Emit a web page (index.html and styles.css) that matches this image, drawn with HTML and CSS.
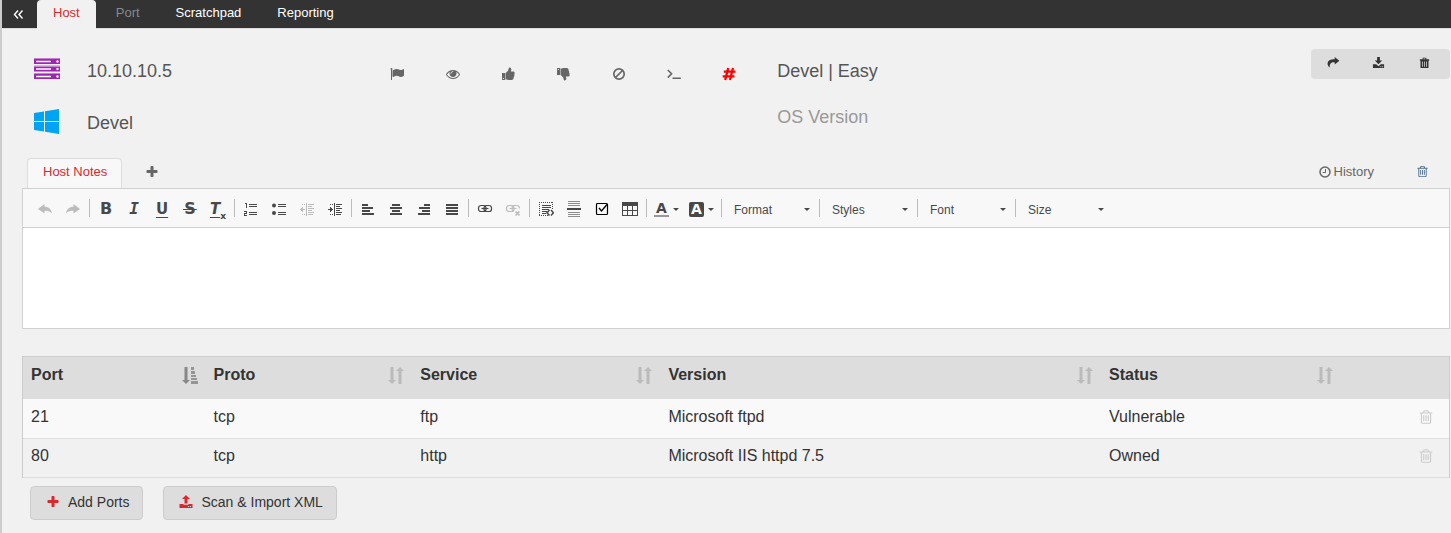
FILE: index.html
```html
<!DOCTYPE html>
<html lang="en">
<head>
<meta charset="utf-8">
<title>10.10.10.5 - Host</title>
<link rel="stylesheet" href="styles.css">
</head>
<body>
<svg class="sprite" aria-hidden="true">
  <symbol id="collapse" viewBox="0 0 14 14"><path d="M7 3.500 3.500 7.500 7 11.500M11.500 3.500 8 7.500l3.500 4" fill="none" stroke="currentColor" stroke-width="1.400"/></symbol>
  <symbol id="flag" viewBox="0 0 1792 1792"><path d="M320 256q0 72-64 110v1266q0 13-9.500 22.500t-22.500 9.500h-64q-13 0-22.500-9.500t-9.500-22.500v-1266q-64-38-64-110 0-53 37.500-90.500t90.500-37.500 90.500 37.500 37.500 90.500zm1472 64v763q0 25-12.500 38.500t-39.500 27.500q-215 116-369 116-61 0-123.500-22t-108.500-48-115.500-48-142.500-22q-192 0-464 146-17 9-33 9-26 0-45-19t-19-45v-742q0-32 31-55 21-14 79-43 236-120 421-120 107 0 200 29t219 88q38 19 88 19 54 0 117.500-21t110-47 88-47 54.500-21q26 0 45 19t19 45z"/></symbol>
  <symbol id="eye" viewBox="0 0 1792 1792"><path d="M1664 960q-152-236-381-353 61 104 61 225 0 185-131.500 316.500t-316.500 131.500-316.500-131.500-131.500-316.500q0-121 61-225-229 117-381 353 133 205 333.500 326.500t434.500 121.500 434.500-121.500 333.500-326.500zm-720-384q0-20-14-34t-34-14q-125 0-214.500 89.500t-89.500 214.500q0 20 14 34t34 14 34-14 14-34q0-86 61-147t147-61q20 0 34-14t14-34zm848 384q0 34-20 69-140 230-376.500 368.500t-499.500 138.500-499.500-139-376.500-368q-20-35-20-69t20-69q140-229 376.500-368t499.500-139 499.500 139 376.500 368q20 35 20 69z"/></symbol>
  <symbol id="thumb" viewBox="0 0 14 14"><path fill-rule="evenodd" d="M1 6h3.200v7H1zM1.800 11v1h1v-1zM4.700 6 7.200 3.400 7.800.9Q8 .3 8.800.5 10.500 1 10.400 2.800L9.800 4.600h2.700Q13.800 4.800 13.700 6.100q-.1.600-.4.900.5.800-.2 1.700.3.900-.4 1.600.2 2.400-1.800 2.700H8Q6.500 12.800 4.700 12.200z"/></symbol>
  <symbol id="ban" viewBox="0 0 14 14"><g fill="none" stroke="currentColor" stroke-width="1.700"><circle cx="7" cy="7" r="5.200"/><path d="m3.500 10.500 7-7"/></g></symbol>
  <symbol id="prompt" viewBox="0 0 14 14"><path d="M.8 3 4.600 6.800 .8 10.600M5.500 11.200h8.300" fill="none" stroke="currentColor" stroke-width="1.600"/></symbol>
  <symbol id="hash" viewBox="0 0 14 14"><path d="M6.200 1 3.200 13M11 1 8 13M1.800 4.700h11.700M.7 9.300h11.700" fill="none" stroke="currentColor" stroke-width="2.300"/></symbol>
  <symbol id="share" viewBox="0 0 14 14"><path d="M8.300 1 13.300 5.100 8.300 9.200V6.700C4.200 6.500 2.700 8 2.900 12.500 1.400 11 .5 9.500.6 8 .9 4.700 3.700 3.400 8.300 3.400z"/></symbol>
  <symbol id="download" viewBox="0 0 14 14"><path fill-rule="evenodd" d="M5.500 1h3v3.800H11L7 8.800l-4-4h2.500zM1 9h3.500L7 11l2.500-2H13v4H1zM9 11v1h1v-1zM11 11v1h1v-1z"/></symbol>
  <symbol id="upload" viewBox="0 0 14 14"><path fill-rule="evenodd" d="m7 0 4 4H8.500v4.500h-3V4H3zM.5 9h4v.8h5V9h4v4H.5zM9 11v1h1v-1zM11 11v1h1v-1z"/></symbol>
  <symbol id="bin" viewBox="0 0 14 14"><path fill-rule="evenodd" d="M5 3.500V2h4v1.500h3V5h-.7v8H2.700V5H2V3.500zM6 2.800v.7h2v-.7zM4.400 6v5.500h.8V6zM6.600 6v5.500h.8V6zM8.800 6v5.500h.8V6z"/></symbol>
  <symbol id="trash" viewBox="0 0 1792 1792"><path d="M704 736v576q0 14-9 23t-23 9h-64q-14 0-23-9t-9-23v-576q0-14 9-23t23-9h64q14 0 23 9t9 23zm256 0v576q0 14-9 23t-23 9h-64q-14 0-23-9t-9-23v-576q0-14 9-23t23-9h64q14 0 23 9t9 23zm256 0v576q0 14-9 23t-23 9h-64q-14 0-23-9t-9-23v-576q0-14 9-23t23-9h64q14 0 23 9t9 23zm128 724v-948h-896v948q0 22 7 40.500t14.500 27 10.500 8.500h832q3 0 10.500-8.500t14.500-27 7-40.500zm-672-1076h448l-48-117q-7-9-17-11h-317q-10 2-17 11zm928 32v64q0 14-9 23t-23 9h-96v948q0 83-47 143.500t-113 60.500h-832q-66 0-113-58.500t-47-141.500v-952h-96q-14 0-23-9t-9-23v-64q0-14 9-23t23-9h309l70-167q15-37 54-63t79-26h320q40 0 79 26t54 63l70 167h309q14 0 23 9t9 23z"/></symbol>
  <symbol id="plus" viewBox="0 0 1792 1792"><path d="M1600 736v192q0 40-28 68t-68 28h-416v416q0 40-28 68t-68 28h-192q-40 0-68-28t-28-68v-416h-416q-40 0-68-28t-28-68v-192q0-40 28-68t68-28h416v-416q0-40 28-68t68-28h192q40 0 68 28t28 68v416h416q40 0 68 28t28 68z"/></symbol>
  <symbol id="clock" viewBox="0 0 14 14"><g fill="none" stroke="currentColor"><circle cx="7" cy="7" r="5" stroke-width="1.500"/><path d="M7.500 4v3.500H4.700"/></g></symbol>
  <symbol id="undo" viewBox="0 0 16 16"><path d="M1 8 7.500 3v2.700C11.500 5.700 14.500 8 15 12.500 12.500 10 10.500 9.700 7.500 9.800V12.500z"/></symbol>
  <symbol id="sort" viewBox="0 0 16 18"><path d="M2.500 0h3v13H8l-4 4-4-4h2.500zM10.500 17h3V4H16l-4-4-4 4h2.500z"/></symbol>
  <symbol id="sorted" viewBox="0 0 16 18"><path d="M2.500 0h3v13H8l-4 4-4-4h2.500z"/><path opacity=".85" d="M9 0h3v3H9zM9 4h4v3H9zM9 8h5v2H9zM9 11h6v2H9zM9 14h7v3H9z"/></symbol>
</svg>

<nav class="topbar" aria-label="Main">
  <button class="topbar-collapse" aria-label="Collapse sidebar"><svg class="i14"><use href="#collapse"/></svg></button>
  <a class="tab tab-active" href="#host">Host</a>
  <a class="tab tab-muted" href="#port">Port</a>
  <a class="tab" href="#scratchpad">Scratchpad</a>
  <a class="tab" href="#reporting">Reporting</a>
</nav>

<main>
  <section class="host">
    <div class="host-id">
      <svg class="server" viewBox="0 0 26 22" aria-hidden="true"><path d="M0 1h26v5H0zM0 8.500h26v5H0zM0 16h26v5H0z" fill="#9c27b0"/><path d="M0 .5h26M0 8h26M0 15.500h26" stroke="#c77fd3"/><path d="M2 3.500h15M2 11h15M2 18.500h15" stroke="#fff" stroke-width="1.300"/><g fill="#fff"><circle cx="23.500" cy="3.500" r="1.200"/><circle cx="23.500" cy="11" r="1.200"/><circle cx="23.500" cy="18.500" r="1.200"/></g></svg>
      <span>10.10.10.5</span>
      <svg class="windows" viewBox="0 0 25 25" aria-hidden="true"><path fill="#00a4f4" d="M0 4 10 2.500V12H0zM11 2.300 25 0v12H11zM0 13h10v9.500L0 21zM11 13h14v12l-14-2.300z"/></svg>
      <span>Devel</span>
    </div>
    <div class="actions">
      <button aria-label="Flag"><svg class="i14"><use href="#flag"/></svg></button>
      <button aria-label="Watch"><svg class="i14"><use href="#eye"/></svg></button>
      <button aria-label="Thumbs up"><svg class="i14"><use href="#thumb"/></svg></button>
      <button aria-label="Thumbs down"><svg class="i14 flip-y"><use href="#thumb"/></svg></button>
      <button aria-label="Out of scope"><svg class="i14"><use href="#ban"/></svg></button>
      <button aria-label="Shell"><svg class="i14"><use href="#prompt"/></svg></button>
      <button class="root" aria-label="Root"><svg class="i14"><use href="#hash"/></svg></button>
    </div>
    <div class="host-os">
      <span>Devel | Easy</span>
      <input type="text" placeholder="OS Version" aria-label="OS Version">
    </div>
    <div class="host-tools">
      <button aria-label="Share"><svg class="i14"><use href="#share"/></svg></button>
      <button aria-label="Download"><svg class="i14"><use href="#download"/></svg></button>
      <button aria-label="Delete host"><svg class="i14"><use href="#bin"/></svg></button>
    </div>
  </section>

  <div class="note-tabs">
    <a class="note-tab" href="#notes">Host Notes</a>
    <button class="note-add" aria-label="Add note"><svg class="i14"><use href="#plus"/></svg></button>
    <button class="history"><svg class="i14"><use href="#clock"/></svg>History</button>
    <button class="note-delete" aria-label="Delete note"><svg class="i14"><use href="#trash"/></svg></button>
  </div>

  <section class="editor">
    <div class="toolbar">
      <button class="off" aria-label="Undo"><svg class="i16"><use href="#undo"/></svg></button>
      <button class="off" aria-label="Redo"><svg class="i16 flip-x"><use href="#undo"/></svg></button>
      <span class="sep"></span>
      <button class="letter" aria-label="Bold">B</button>
      <button class="letter mono" aria-label="Italic">I</button>
      <button class="letter under" aria-label="Underline">U</button>
      <button class="letter" aria-label="Strikethrough"><span class="strike">S</span></button>
      <button class="letter clear" aria-label="Remove format"><u>T</u><sub>x</sub></button>
      <span class="sep"></span>
      <button aria-label="Numbered list"><svg class="i16 px" viewBox="0 0 16 16"><path d="M2 2h2v5H3V3H2zM1 10h3v3H2v1h2v1H1v-3h2v-1H1zM6 3h8v1H6zM6 5h8v1H6zM6 11h8v1H6zM6 13h8v1H6z"/></svg></button>
      <button aria-label="Bulleted list"><svg class="i16" viewBox="0 0 16 16"><circle cx="3" cy="4.500" r="2"/><circle cx="3" cy="12" r="2"/><path d="M7 3h8v1H7zM7 5h8v1H7zM7 11h8v1H7zM7 13h8v1H7z"/></svg></button>
      <button class="off" aria-label="Decrease indent"><svg class="i16 px" viewBox="0 0 16 16"><path d="M3 3h1v1H3zM5 3h1v1H5zM3 13h1v1H3zM5 13h1v1H5zM1 8h5v1H1zM2 7h1v3H2zM3 6h1v5H3zM7 2h1v13H7zM9 3h6v1H9zM9 5h4v1H9zM9 7h6v1H9zM9 9h4v1H9zM9 11h6v1H9zM9 13h5v1H9z"/></svg></button>
      <button aria-label="Increase indent"><svg class="i16 px" viewBox="0 0 16 16"><path d="M3 3h1v1H3zM5 3h1v1H5zM3 13h1v1H3zM5 13h1v1H5zM1 8h5v1H1zM4 7h1v3H4zM3 6h1v5H3zM7 2h1v13H7zM9 3h6v1H9zM9 5h4v1H9zM9 7h6v1H9zM9 9h4v1H9zM9 11h6v1H9zM9 13h5v1H9z"/></svg></button>
      <span class="sep"></span>
      <button aria-label="Align left"><svg class="i16 px" viewBox="0 0 16 16"><path d="M2 3h6v2H2zM2 6h11v2H2zM2 9h8v2H2zM2 12h12v2H2z"/></svg></button>
      <button aria-label="Center"><svg class="i16 px" viewBox="0 0 16 16"><path d="M4 3h8v2H4zM2 6h12v2H2zM4 9h8v2H4zM2 12h12v2H2z"/></svg></button>
      <button aria-label="Align right"><svg class="i16 px" viewBox="0 0 16 16"><path d="M8 3h6v2H8zM3 6h11v2H3zM6 9h8v2H6zM2 12h12v2H2z"/></svg></button>
      <button aria-label="Justify"><svg class="i16 px" viewBox="0 0 16 16"><path d="M2 3h12v2H2zM2 6h12v2H2zM2 9h12v2H2zM2 12h12v2H2z"/></svg></button>
      <span class="sep"></span>
      <button aria-label="Link"><svg class="i16" viewBox="0 0 16 16"><g fill="none" stroke="currentColor" stroke-width="1.200"><rect x="1.500" y="4.500" width="7.500" height="6" rx="2.600"/><rect x="7" y="4.500" width="7.500" height="6" rx="2.600"/><path d="M4.500 7.500h7"/></g></svg></button>
      <button class="off" aria-label="Unlink"><svg class="i16" viewBox="0 0 16 16"><g fill="none" stroke="currentColor" stroke-width="1.200"><rect x="1.500" y="4.500" width="7.500" height="6" rx="2.600"/><path d="M8 10.200Q7 9 7 7.500q0-3 2.500-3h2.500q2.500 0 2.500 3M4.500 7.500h7"/><path d="M10.500 10.500l4 4M14.500 10.500l-4 4" stroke-width="1.700"/></g></svg></button>
      <span class="sep"></span>
      <button aria-label="Div container"><svg class="i16" viewBox="0 0 16 16"><path d="M1 1.500h14M1 14.500h9M1.500 1v14M14.500 1v8" fill="none" stroke="currentColor" stroke-dasharray="1 1"/><path d="M4 4h9v1H4zM4 6h9v1H4zM4 8h7v1H4zM4 10h5v1H4zM4 12h4v1H4z"/><path d="m11.500 9-2.500 2.700 2.500 2.800M13 9l2.500 2.700-2.500 2.800" fill="none" stroke="currentColor" stroke-width="1.500"/></svg></button>
      <button aria-label="Page break"><svg class="i16 px" viewBox="0 0 16 16"><path opacity=".6" d="M2 0h12v1H2zM2 2h12v1H2zM2 4h12v1H2zM2 11h12v1H2zM2 13h12v1H2zM2 15h12v1H2z"/><path d="M1 7h14v2H1z"/></svg></button>
      <button class="ink" aria-label="Checkbox"><svg class="i16" viewBox="0 0 16 16"><g fill="none" stroke="currentColor"><rect x="2.500" y="2.500" width="11" height="11" rx="1" stroke-width="1.200"/><path d="m5 7 2.500 3L13 3.500" stroke-width="1.300"/></g></svg></button>
      <button aria-label="Table"><svg class="i16 px" viewBox="0 0 16 16"><path fill-rule="evenodd" d="M0 1h16v14H0zM1 5v4h4V5zM6 5v4h4V5zM11 5v4h4V5zM1 10v4h4v-4zM6 10v4h4v-4zM11 10v4h4v-4z"/></svg></button>
      <span class="sep"></span>
      <button class="color" aria-label="Text color"><span class="color-text">A</span><span class="caret"></span></button>
      <button class="color" aria-label="Background color"><span class="color-fill">A</span><span class="caret"></span></button>
      <span class="sep"></span>
      <label class="combo"><select aria-label="Format"><option>Format</option></select><span class="caret"></span></label>
      <span class="sep"></span>
      <label class="combo"><select aria-label="Styles"><option>Styles</option></select><span class="caret"></span></label>
      <span class="sep"></span>
      <label class="combo"><select aria-label="Font"><option>Font</option></select><span class="caret"></span></label>
      <span class="sep"></span>
      <label class="combo"><select aria-label="Size"><option>Size</option></select><span class="caret"></span></label>
    </div>
    <textarea class="editor-body" aria-label="Host notes"></textarea>
  </section>

  <table class="ports">
    <colgroup><col class="c-port"><col class="c-proto"><col class="c-service"><col class="c-version"><col class="c-status"><col></colgroup>
    <thead>
      <tr>
        <th class="sorted"><div>Port<svg><use href="#sorted"/></svg></div></th>
        <th><div>Proto<svg><use href="#sort"/></svg></div></th>
        <th><div>Service<svg><use href="#sort"/></svg></div></th>
        <th><div>Version<svg><use href="#sort"/></svg></div></th>
        <th><div>Status<svg><use href="#sort"/></svg></div></th>
        <th></th>
      </tr>
    </thead>
    <tbody>
      <tr><td>21</td><td>tcp</td><td>ftp</td><td>Microsoft ftpd</td><td>Vulnerable</td><td class="row-delete"><button aria-label="Delete port 21"><svg class="i16"><use href="#trash"/></svg></button></td></tr>
      <tr><td>80</td><td>tcp</td><td>http</td><td>Microsoft IIS httpd 7.5</td><td>Owned</td><td class="row-delete"><button aria-label="Delete port 80"><svg class="i16"><use href="#trash"/></svg></button></td></tr>
    </tbody>
  </table>

  <div class="footer">
    <button class="btn"><span><svg class="i14"><use href="#plus"/></svg></span>Add Ports</button>
    <button class="btn"><span><svg class="i14"><use href="#upload"/></svg></span>Scan &amp; Import XML</button>
  </div>
</main>
</body>
</html>
```
FILE: styles.css
```css
* { box-sizing: border-box; }

body {
  margin: 0;
  min-height: 100vh;
  border-left: 2px solid #ccc;
  background: #f1f1f1;
  color: #333;
  font: 13px/20px "Liberation Sans", Arial, sans-serif;
}

button {
  display: flex;
  align-items: center;
  justify-content: center;
  margin: 0;
  padding: 0;
  border: 0;
  background: none;
  color: inherit;
  font: inherit;
  cursor: pointer;
}

a { color: inherit; text-decoration: none; }
svg { display: block; flex: none; fill: currentColor; }

.sprite { display: none; }
.i14 { width: 14px; height: 14px; }
.i16 { width: 16px; height: 16px; }
.px { shape-rendering: crispEdges; }
.flip-x { transform: scaleX(-1); }
.flip-y { transform: scaleY(-1); }

/* Top navigation */
.topbar {
  display: flex;
  gap: 4px;
  height: 29px;
  border-bottom: 1px solid #ddd;
  background: #333;
  color: #fff;
}
.topbar-collapse { width: 31px; }
.tab { padding: 3px 16px 5px; }
.tab-active {
  height: 29px;
  border-radius: 4px 4px 0 0;
  background: #f1f1f1;
  color: #d9292f;
}
.tab-muted { color: #888; }

/* Host summary */
main { padding: 16px 1px 12px 20px; }

.host {
  display: grid;
  grid-template-columns: 335fr 407fr 533fr 139px;
  padding-left: 12px;
  color: #555;
  font-size: 18px;
}
.host-id {
  display: grid;
  grid-template-columns: 53px 1fr;
  grid-auto-rows: 52px;
  align-items: center;
}
.server { width: 26px; height: 22px; margin-bottom: 4px; }
.windows { width: 25px; height: 25px; margin-bottom: 4px; }
.actions {
  display: grid;
  grid-template-columns: repeat(7, 1fr);
  height: 58px;
  margin-right: 20px;
  color: #666;
}
.root { color: #f00; }
.host-os {
  display: grid;
  grid-auto-rows: 46px;
  align-items: center;
  align-content: start;
  padding-top: 3px;
}
.host-os input {
  padding: 0;
  border: 0;
  background: none;
  color: inherit;
  font: inherit;
}
.host-os input::placeholder { color: #999; }
.host-tools {
  display: grid;
  grid-template-columns: repeat(3, 1fr);
  height: 30px;
  margin-top: 4px;
  padding: 0 3px 4px 0;
  border-radius: 4px;
  background: #ddd;
  color: #333;
}
.host-tools svg { width: 13px; height: 13px; }

/* Note tabs */
.note-tabs {
  display: flex;
  align-items: center;
  height: 30px;
  margin-top: 9px;
  padding: 0 21px 0 5px;
  color: #666;
}
.note-tab {
  height: 30px;
  padding: 3px 14px 6px 15px;
  border: 1px solid #ddd;
  border-bottom: 0;
  border-radius: 4px 4px 0 0;
  background: #f8f8f8;
  color: #d9292f;
}
.note-add { margin: 0 auto 3px 23px; }
.history { gap: 2px; margin-bottom: 3px; }
.note-delete { margin: 0 0 3px 42px; color: #4f6f94; }
.note-delete svg { width: 13px; height: 13px; }

/* Rich text editor */
.editor { border: 1px solid #d1d1d1; background: #fff; }
.toolbar {
  display: flex;
  flex-wrap: wrap;
  align-items: center;
  padding: 5px 8px;
  border-bottom: 1px solid #d1d1d1;
  background: #f8f8f8;
  color: #484848;
}
.toolbar button { width: 28px; height: 28px; padding-top: 2px; }
.toolbar .off { color: #bcbcbc; }
.toolbar .ink { color: #000; }
.toolbar .color { gap: 4px; width: 35px; }
.sep { width: 1px; height: 18px; margin: 0 2px; background: #bcbcbc; }
.toolbar .letter { font: bold 16px/16px "DejaVu Sans", sans-serif; }
.toolbar .mono { font-family: "DejaVu Sans Mono", monospace; font-style: italic; }
.toolbar .under { font-size: 15px; text-decoration: underline 1px; text-underline-offset: 3px; }
.strike {
  padding: 0 1px;
  background: linear-gradient(currentColor, currentColor) center / 100% 1px no-repeat;
}
.toolbar .clear { font-size: 15px; font-style: italic; }
.clear u { text-decoration-thickness: 1px; text-underline-offset: 3px; }
.clear sub { align-self: flex-end; font: bold 9px/12px "DejaVu Sans", sans-serif; }
.caret {
  border: 3px solid transparent;
  border-top-color: currentColor;
  border-bottom: 0;
}
.color-text, .color-fill {
  width: 15px;
  height: 15px;
  font: bold 14px/13px "DejaVu Sans", sans-serif;
  text-align: center;
}
.color-text { border-bottom: 2px solid #999; }
.color-fill { border-radius: 2px; background: #484848; color: #fff; line-height: 15px; }
.combo { display: grid; align-items: center; width: 93px; height: 28px; }
.combo > * { grid-area: 1 / 1; }
.combo select {
  height: 28px;
  padding: 3px 18px 0 10px;
  border: 0;
  appearance: none;
  background: none;
  color: inherit;
  font: 12px/20px "Liberation Sans", Arial, sans-serif;
}
.combo .caret { justify-self: end; margin: 2px 7px 0 0; pointer-events: none; }
.editor-body {
  display: block;
  width: 100%;
  height: 100px;
  padding: 16px;
  border: 0;
  background: #fff;
  font: inherit;
  resize: none;
}

/* Ports table */
.ports {
  width: 100%;
  margin-top: 27px;
  border: 1px solid #ccc;
  border-bottom: 0;
  border-spacing: 0;
  table-layout: fixed;
  font-size: 16px;
}
.c-port { width: 12.8%; }
.c-proto { width: 14.5%; }
.c-service { width: 17.4%; }
.c-version { width: 30.9%; }
.c-status { width: 16.8%; }
.ports th {
  padding: 8px 8px 14px;
  background: #ddd;
  text-align: left;
}
.ports th div { display: flex; justify-content: space-between; height: 20px; }
.ports th svg { width: 16px; height: 18px; margin-top: 2px; color: #bbb; }
.ports th.sorted svg { color: #888; }
.ports td { padding: 8px 8px 10px; border-bottom: 1px solid #ddd; }
.ports tbody tr:first-child { background: #f9f9f9; }
.ports tbody tr:first-child td { padding-bottom: 11px; }
.ports tbody tr + tr td { padding-top: 7px; padding-bottom: 11px; }
.row-delete button { margin: 0 7px 0 auto; color: #ccc; }

/* Table actions */
.footer { display: flex; gap: 20px; padding: 8px 8px 0; }
.btn {
  gap: 5px;
  height: 34px;
  padding: 0 13px 2px 12px;
  border: 1px solid #ccc;
  border-radius: 4px;
  background: #ddd;
  font-size: 14px;
}
.btn span { display: flex; justify-content: center; width: 20px; color: #d9292f; }
```
